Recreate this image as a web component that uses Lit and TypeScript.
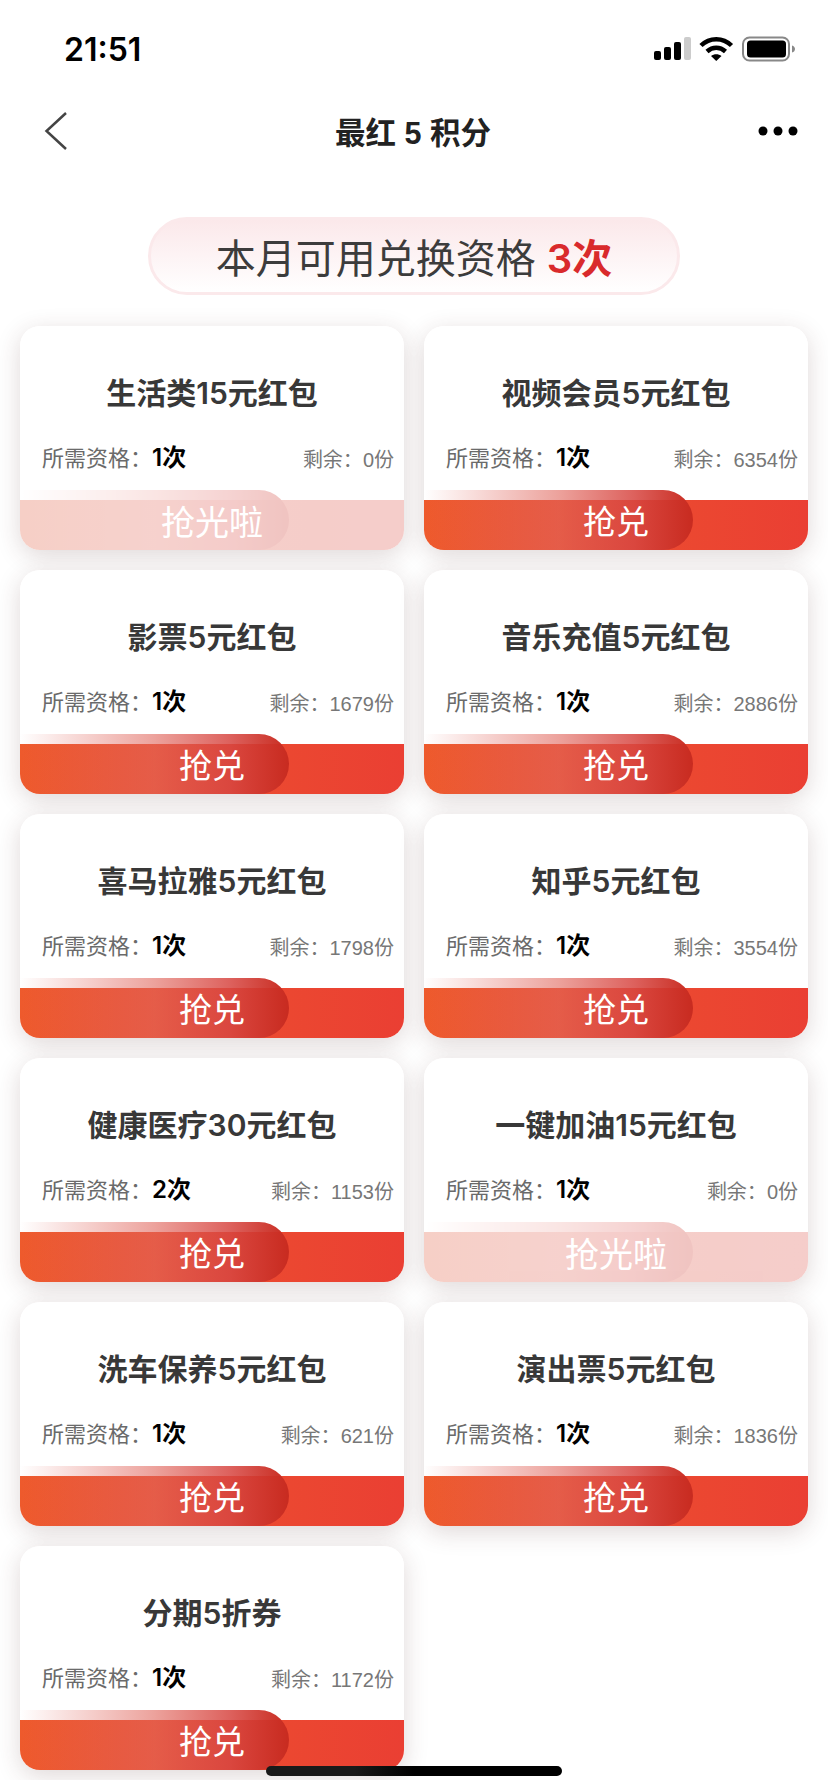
import { css, html, LitElement } from "lit";
import { customElement } from "lit/decorators.js";

interface Offer {
  title: string;
  cost: number;
  left: number;
}

const OFFERS: Offer[] = [
  { title: "生活类15元红包", cost: 1, left: 0 },
  { title: "视频会员5元红包", cost: 1, left: 6354 },
  { title: "影票5元红包", cost: 1, left: 1679 },
  { title: "音乐充值5元红包", cost: 1, left: 2886 },
  { title: "喜马拉雅5元红包", cost: 1, left: 1798 },
  { title: "知乎5元红包", cost: 1, left: 3554 },
  { title: "健康医疗30元红包", cost: 2, left: 1153 },
  { title: "一键加油15元红包", cost: 1, left: 0 },
  { title: "洗车保养5元红包", cost: 1, left: 621 },
  { title: "演出票5元红包", cost: 1, left: 1836 },
  { title: "分期5折券", cost: 1, left: 1172 },
];

@customElement("app-root")
export class AppRoot extends LitElement {
  static styles = css`
    :host {
      display: block;
      font-family: "Liberation Sans", "Noto Sans CJK SC", sans-serif;
    }

    .page {
      position: relative;
      height: 1780px;
      overflow: hidden;
      background: #fff;
    }

    .status {
      display: flex;
      align-items: center;
      justify-content: space-between;
      height: 98px;
      padding: 0 33px 0 64px;
      box-sizing: border-box;
    }

    .time {
      font-family: Inter, sans-serif;
      font-size: 32px;
      font-weight: 600;
      color: #000;
    }

    .status svg {
      display: block;
    }

    .nav {
      display: flex;
      align-items: center;
      justify-content: space-between;
      height: 66px;
      padding: 0 30px 0 44px;
    }

    .nav svg {
      display: block;
    }

    .nav-title {
      font-size: 30.5px;
      font-weight: 600;
      color: #222;
    }

    .quota-wrap {
      display: flex;
      justify-content: center;
      margin: 53px 0 31px;
    }

    .quota {
      box-sizing: border-box;
      width: 532px;
      height: 78px;
      display: flex;
      align-items: center;
      justify-content: center;
      border: 3px solid #fbe9eb;
      border-radius: 39px;
      background: linear-gradient(180deg, #fbe8ea, #fff);
      font-size: 40px;
      color: #3c3c3c;
      gap: 11px;
    }

    .quota b {
      font-family: Inter, "Noto Sans CJK SC", sans-serif;
      color: #d92a2c;
      font-weight: 600;
    }

    .grid {
      display: grid;
      grid-template-columns: 384px 384px;
      gap: 20px;
      padding: 0 20px;
    }

    .card {
      display: flex;
      flex-direction: column;
      height: 224px;
      border-radius: 20px;
      overflow: hidden;
      background: #fff;
    }

    .shadow {
      border-radius: 20px;
      box-shadow: 0 6px 24px rgba(80, 40, 40, 0.18);
    }

    .title {
      margin-top: 46px;
      line-height: 42px;
      text-align: center;
      font-family: Inter, "Noto Sans CJK SC", sans-serif;
      font-size: 30px;
      font-weight: 600;
      color: #383838;
    }

    .meta {
      display: flex;
      align-items: center;
      justify-content: space-between;
      height: 36px;
      margin-top: 26px;
      padding: 0 10px 0 22px;
    }

    .need {
      margin-bottom: 6px;
      font-size: 22px;
      color: #6a6a6a;
    }

    .need b {
      font-family: Inter, "Noto Sans CJK SC", sans-serif;
      font-size: 24px;
      font-weight: 600;
      color: #000;
    }

    .remain {
      font-size: 20px;
      color: #777;
    }

    .action {
      position: relative;
      height: 60px;
      margin-top: auto;
      display: flex;
      align-items: center;
      justify-content: center;
      font-size: 33px;
      color: #fff;
    }

    .action.out {
      opacity: 0.28;
    }

    .action.out span {
      font-size: 34px;
    }

    .strip {
      position: absolute;
      left: 0;
      right: 0;
      bottom: 0;
      height: 50px;
      background: linear-gradient(90deg, #ee5a2c, #ea3f33);
    }

    .action.out .strip {
      background: linear-gradient(90deg, #df5433, #db4c42);
    }

    .glow {
      position: absolute;
      left: 0;
      top: 0;
      bottom: 0;
      width: 269px;
      border-radius: 0 30px 30px 0;
      background: linear-gradient(
        90deg,
        rgba(255, 255, 255, 0),
        rgba(224, 100, 90, 0.6) 50%,
        rgba(215, 70, 65, 0.85) 78%,
        #c82b20
      );
    }

    .action span {
      position: relative;
    }

    .home {
      position: absolute;
      left: 266px;
      top: 1766px;
      width: 296px;
      height: 10px;
      border-radius: 5px;
      background: linear-gradient(90deg, #1a1a1a 0 30%, #000 50%);
    }
  `;

  private renderOffer(offer: Offer) {
    const soldOut = offer.left === 0;
    return html`<div class="shadow">
      <div class="card">
        <div class="title">${offer.title}</div>
        <div class="meta">
          <span class="need">所需资格：<b>${offer.cost}次</b></span>
          <span class="remain">剩余：${offer.left}份</span>
        </div>
        <div class="action ${soldOut ? "out" : ""}">
          <div class="strip"></div>
          <div class="glow"></div>
          <span>${soldOut ? "抢光啦" : "抢兑"}</span>
        </div>
      </div>
    </div>`;
  }

  render() {
    return html`<div class="page">
      <div class="status">
        <span class="time">21:51</span>
        <svg width="142" height="26" viewBox="0 0 142 26">
          <rect x="1" y="15" width="7" height="9" rx="2" />
          <rect x="11" y="11" width="7" height="13" rx="2" />
          <rect x="21" y="6" width="7" height="18" rx="2" />
          <rect x="31" y="1" width="7" height="23" rx="2" fill="#ccc" />
          <path
            d="M48 9.500c8.500-8.500 22-8.500 30.500 0M54 15.500c5.500-5 13-5 18.500 0"
            fill="none"
            stroke="#000"
            stroke-width="4.500"
          />
          <path d="M58 20c3-2.500 7.500-2.500 10.500 0l-5.250 5Z" />
          <rect x="90" y="1.500" width="46" height="23" rx="6.500" fill="none" stroke="#888" stroke-width="2" />
          <rect x="94" y="4.500" width="39" height="17" rx="3.500" />
          <path d="M139 9.500c2 .5 3 2 3 3.500s-1 3-3 3.500Z" fill="#888" />
        </svg>
      </div>
      <div class="nav">
        <svg width="24" height="38" viewBox="0 0 24 38">
          <path d="M22 1 2.500 19 22 37" fill="none" stroke="#444" stroke-width="2.500" />
        </svg>
        <span class="nav-title">最红 5 积分</span>
        <svg width="40" height="10" viewBox="0 0 40 10">
          <circle cx="5" cy="5" r="4.500" />
          <circle cx="20" cy="5" r="4.500" />
          <circle cx="35" cy="5" r="4.500" />
        </svg>
      </div>
      <div class="quota-wrap">
        <div class="quota">本月可用兑换资格<b>3次</b></div>
      </div>
      <div class="grid">${OFFERS.map((o) => this.renderOffer(o))}</div>
      <div class="home"></div>
    </div>`;
  }
}
